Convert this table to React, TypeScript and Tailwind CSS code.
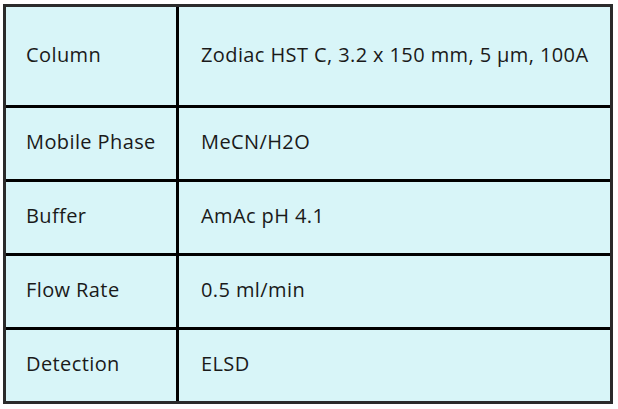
const rows: { label: string; value: string; tall?: boolean }[] = [
  { label: 'Column', value: 'Zodiac HST C, 3.2 x 150 mm, 5 µm, 100A', tall: true },
  { label: 'Mobile Phase', value: 'MeCN/H2O' },
  { label: 'Buffer', value: 'AmAc pH 4.1' },
  { label: 'Flow Rate', value: '0.5 ml/min' },
  { label: 'Detection', value: 'ELSD' },
];

export default function App() {
  return (
    <div className="w-[618px] h-[409px] bg-white pl-[3px] pt-[4px] font-['Open_Sans',sans-serif] text-[20px] tracking-[0.4px] text-[#1a1a1a]">
      <div className="w-[610px] border-[3px] border-[#2b2b2b] bg-[#d8f5f8]">
        {rows.map((r, i) => (
          <div
            key={r.label}
            className={`flex pb-[3px] ${r.tall ? 'h-[98px]' : 'h-[74px]'} ${i > 0 ? 'border-t-[3px] border-black' : ''}`}
          >
            <div className="w-[173px] shrink-0 border-r-[3px] border-black -mb-[3px] flex items-center pb-[3px] pl-[20px]">
              {r.label}
            </div>
            <div className="flex-1 flex items-center pl-[22px]">{r.value}</div>
          </div>
        ))}
      </div>
    </div>
  );
}
